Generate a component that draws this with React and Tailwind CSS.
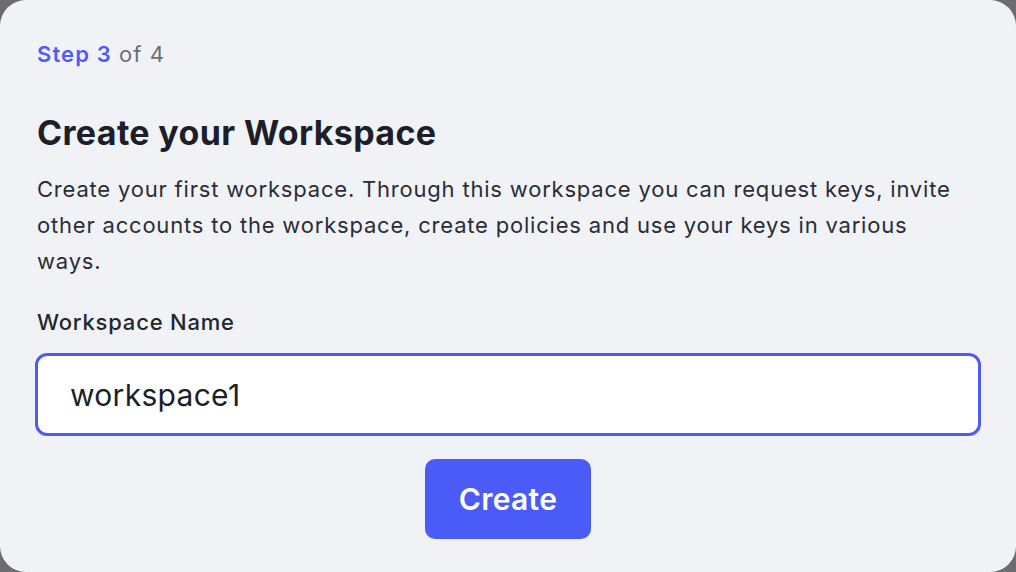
import React, { useState } from 'react';

const App = () => {
  const [name, setName] = useState('workspace1');

  return (
    <div className="w-[1016px] h-[572px] bg-[#6d6d71] font-['Inter','Liberation_Sans',sans-serif]">
      <div className="h-full rounded-[26px] bg-[#f1f2f6] px-[37px] pt-[40px]">
        <p className="text-[22px] leading-[28px] tracking-[1.1px] text-[#6b6e76]">
          <span className="font-semibold text-[#4f5bf6]">Step 3</span> of 4
        </p>

        <h1 className="mt-[45px] text-[34px] leading-[40px] tracking-[0.35px] font-bold text-[#1c1f29]">
          Create your Workspace
        </h1>
        <p className="mt-[18px] max-w-[925px] text-[22px] leading-[36px] tracking-[0.8px] text-[#2a2d36]">
          Create your first workspace. Through this workspace you can request keys, invite other accounts to the
          workspace, create policies and use your keys in various ways.
        </p>

        <label className="block mt-[29px] text-[22px] leading-[28px] tracking-[0.8px] font-medium text-[#23262f]">
          Workspace Name
        </label>
        <input
          value={name}
          onChange={(e) => setName(e.target.value)}
          className="mt-[17px] -mx-[2px] w-[calc(100%+4px)] h-[83px] rounded-[12px] border-[3px] border-[#4f5bf6] bg-white px-[32px] text-[30px] tracking-[0.3px] text-[#1c1f29] outline-none"
        />

        <div className="flex justify-center mt-[23px]">
          <button className="w-[166px] h-[80px] rounded-[10px] bg-[#4b5bf7] text-[30px] tracking-[0.3px] font-semibold text-white">
            Create
          </button>
        </div>
      </div>
    </div>
  );
};

export default App;
